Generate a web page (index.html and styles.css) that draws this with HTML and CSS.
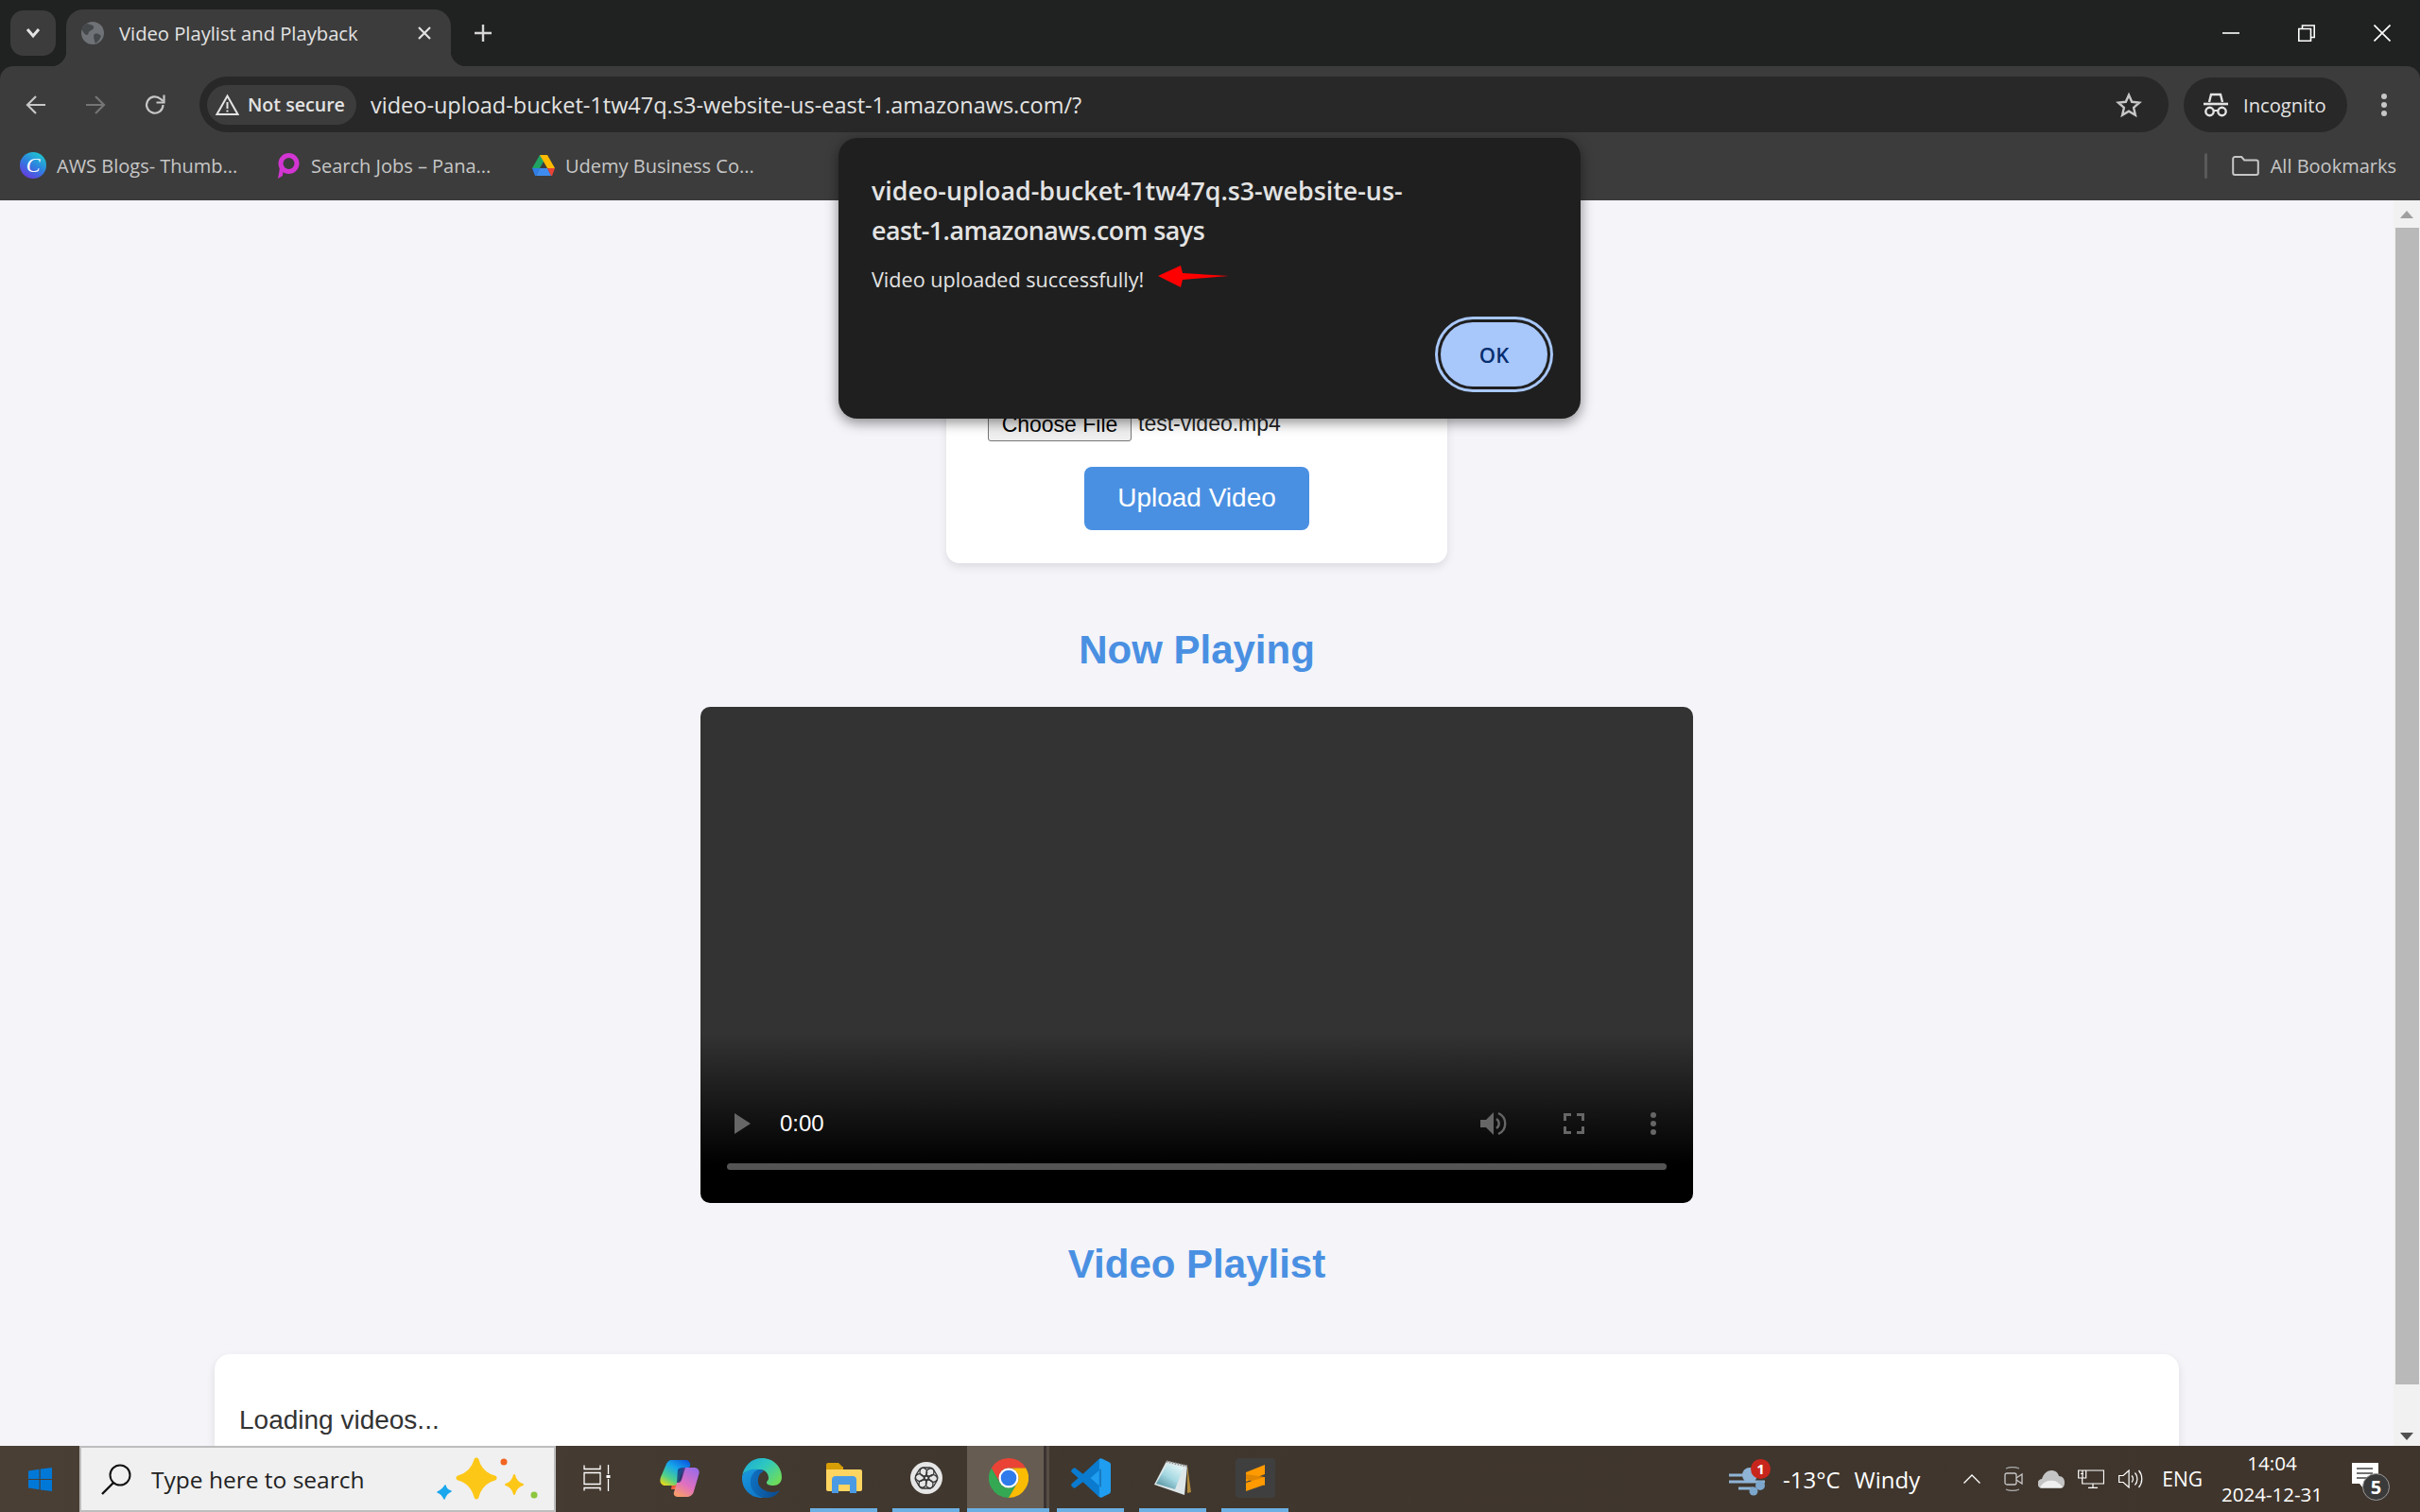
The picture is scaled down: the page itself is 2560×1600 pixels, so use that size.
FILE: index.html

```html
<!DOCTYPE html>
<html lang="en">
<head>
  <meta charset="UTF-8">
  <title>Video Playlist and Playback</title>
  <link rel="stylesheet" href="styles.css">
</head>
<body>
<div class="window">

  <!-- tab strip -->
  <div class="tabstrip">
    <div class="tab-search">
      <svg width="18" height="12" viewBox="0 0 18 12"><path d="M3 2l6 7 6-7" fill="none" stroke="#e3e3e3" stroke-width="3"/></svg>
    </div>
    <div class="tab">
      <svg class="tab-icon" width="24" height="24" viewBox="0 0 24 24"><circle cx="12" cy="12" r="12" fill="#6f7276"/><path d="M6 2c3 1 6 1 7 3s-2 4-4 5-1 4-3 4-4-3-5-5 2-6 5-7zM14 13c3-1 5 0 7 2-1 3-3 6-6 8-1-3-3-8-1-10z" fill="#45484b"/></svg>
      <span class="tab-title">Video Playlist and Playback</span>
      <svg class="tab-close" width="16" height="16" viewBox="0 0 16 16"><path d="M2 2l12 12M14 2L2 14" stroke="#e3e3e3" stroke-width="2.2"/></svg>
    </div>
    <svg class="new-tab" width="20" height="20" viewBox="0 0 20 20"><path d="M10 1v18M1 10h18" stroke="#d6d6d6" stroke-width="2.4"/></svg>
    <div class="win-controls">
      <svg width="18" height="18" viewBox="0 0 18 18"><path d="M0 9h18" stroke="#fff" stroke-width="1.6"/></svg>
      <svg width="18" height="18" viewBox="0 0 18 18"><path d="M.8 4.500h12.700v12.700H.8zM4.500 4V1h12.700v12.500h-3.500" fill="none" stroke="#fff" stroke-width="1.6"/></svg>
      <svg width="18" height="18" viewBox="0 0 18 18"><path d="M.5.5l17 17M17.500.5l-17 17" stroke="#fff" stroke-width="1.6"/></svg>
    </div>
  </div>

  <!-- address bar -->
  <div class="toolbar">
    <div class="nav-btn"><svg width="24" height="24" viewBox="0 0 24 24"><path d="M22 12H3M12 3l-9 9 9 9" fill="none" stroke="#c7c7c7" stroke-width="2.2"/></svg></div>
    <div class="nav-btn"><svg width="24" height="24" viewBox="0 0 24 24"><path d="M2 12h19M12 3l9 9-9 9" fill="none" stroke="#757575" stroke-width="2.2"/></svg></div>
    <div class="nav-btn"><svg width="24" height="24" viewBox="0 0 24 24"><path d="M20.500 12a8.700 8.700 0 1 1-2.700-6.300L20.500 8" fill="none" stroke="#c7c7c7" stroke-width="2.200"/><path d="M21.500 1.500v8h-8" fill="none" stroke="#c7c7c7" stroke-width="2.200"/></svg></div>
    <div class="omnibox">
      <div class="chip">
        <svg width="25" height="24" viewBox="0 0 25 24"><path d="M12.500 2.500L23.500 22H1.500z" fill="none" stroke="#e3e3e3" stroke-width="2"/><path d="M12.500 9v7M12.500 17.500v2" stroke="#e3e3e3" stroke-width="2"/></svg>
        <span class="chip-text">Not secure</span>
      </div>
      <span class="url">video-upload-bucket-1tw47q.s3-website-us-east-1.amazonaws.com/?</span>
      <svg class="star" width="28" height="28" viewBox="0 0 28 28"><path d="M14 3.500l3.200 7.300 7.900.800-6 5.300 1.800 7.800-6.900-4.100-6.900 4.100 1.800-7.800-6-5.300 7.900-.8z" fill="none" stroke="#c7c7c7" stroke-width="2.400" stroke-linejoin="miter"/></svg>
    </div>
    <div class="incognito">
      <svg width="28" height="26" viewBox="0 0 28 26"><path d="M7 10l2-8h10l2 8" fill="none" stroke="#e3e3e3" stroke-width="2.400"/><path d="M1 12h26" stroke="#e3e3e3" stroke-width="2.600"/><circle cx="7.500" cy="20" r="4.200" fill="none" stroke="#e3e3e3" stroke-width="2.400"/><circle cx="20.500" cy="20" r="4.200" fill="none" stroke="#e3e3e3" stroke-width="2.400"/><path d="M11.500 19h5" stroke="#e3e3e3" stroke-width="2"/></svg>
      <span>Incognito</span>
    </div>
    <div class="menu-dots"><i></i><i></i><i></i></div>
  </div>

  <!-- bookmarks -->
  <div class="bookmarks">
    <div class="bm bm-canva">
      <svg width="28" height="28" viewBox="0 0 28 28"><defs><linearGradient id="canva" x1="0.800" y1="0" x2="0.200" y2="1"><stop offset="0" stop-color="#1ccdd0"/><stop offset=".5" stop-color="#2f7fe0"/><stop offset="1" stop-color="#6a35e0"/></linearGradient></defs><circle cx="14" cy="14" r="14" fill="url(#canva)"/><text x="14" y="21" class="canva-c">C</text></svg>
      <span>AWS Blogs- Thumb...</span>
    </div>
    <div class="bm bm-pana">
      <svg width="24" height="27" viewBox="0 0 24 27"><circle cx="12.500" cy="11" r="8.500" fill="none" stroke="#d335d3" stroke-width="5"/><path d="M3 11c0 6-1 11-2 16l5-3 1-10z" fill="#d335d3"/></svg>
      <span>Search Jobs – Pana...</span>
    </div>
    <div class="bm bm-drive">
      <svg width="26" height="24" viewBox="0 0 26 24"><path d="M9 1h8L9 15H1z" fill="#1fa463"/><path d="M9 1h8l8 14h-8z" fill="#ffba00"/><path d="M1 15h8l-4 8H4z" fill="#2f7fe8"/><path d="M9 15h8l4 8H5z" fill="#3f8cf0"/><path d="M17 15h8l-3 8h-1z" fill="#ea4335"/></svg>
      <span>Udemy Business Co...</span>
    </div>
    <div class="bm-right">
      <div class="bm-divider"></div>
      <svg width="29" height="21" viewBox="0 0 29 21"><path d="M1.200 3a2 2 0 0 1 2-2h7l3 3.500h12.600a2 2 0 0 1 2 2V18a2 2 0 0 1-2 2H3.200a2 2 0 0 1-2-2z" fill="none" stroke="#c7c7c7" stroke-width="2"/></svg>
      <span>All Bookmarks</span>
    </div>
  </div>

  <!-- page -->
  <div class="viewport">
    <div class="page">
      <section class="upload-card">
        <div class="file-row">
          <button class="file-btn">Choose File</button>
          <span>test-video.mp4</span>
        </div>
        <button class="upload-btn">Upload Video</button>
      </section>

      <h2 class="now-playing">Now Playing</h2>
      <div class="player">
        <div class="player-controls">
          <div class="control-row">
            <svg width="18" height="22" viewBox="0 0 18 22"><path d="M0 0l17 11L0 22z" fill="#666"/></svg>
            <span class="time">0:00</span>
            <svg class="ctl-volume" width="28" height="26" viewBox="0 0 28 26"><path d="M0 9h6l8-8v24l-8-8H0z" fill="#666"/><path d="M17 8a6 6 0 0 1 0 10M19 2a12 12 0 0 1 0 22" fill="none" stroke="#666" stroke-width="2.400"/></svg>
            <svg class="ctl-full" width="22" height="22" viewBox="0 0 22 22"><path d="M1.500 8V1.500H8M14 1.500h6.500V8M20.500 14v6.500H14M8 20.500H1.500V14" fill="none" stroke="#666" stroke-width="3"/></svg>
            <svg class="ctl-more" width="6" height="24" viewBox="0 0 6 24"><circle cx="3" cy="3" r="3" fill="#666"/><circle cx="3" cy="12" r="3" fill="#666"/><circle cx="3" cy="21" r="3" fill="#666"/></svg>
          </div>
          <div class="progress"></div>
        </div>
      </div>

      <h2 class="playlist-title">Video Playlist</h2>
      <section class="playlist-card">
        <p class="loading">Loading videos...</p>
      </section>
    </div>
    <div class="scrollbar">
      <svg width="14" height="8" viewBox="0 0 14 8"><path d="M7 0l7 8H0z" fill="#a0a0a0"/></svg>
      <div class="thumb"></div>
      <svg width="14" height="8" viewBox="0 0 14 8"><path d="M0 0h14L7 8z" fill="#505050"/></svg>
    </div>
  </div>

  <!-- taskbar -->
  <div class="taskbar">
    <div class="start">
      <svg width="25" height="25" viewBox="0 0 25 25"><path d="M0 3.500l11.500-1.700v10.100H0zM12.700 1.600L25 0v11.900H12.700zM0 13.100h11.500v10.100L0 21.500zM12.700 13.100H25V25l-12.300-1.600z" fill="#0078d7"/></svg>
    </div>
    <div class="searchbox">
      <svg width="34" height="34" viewBox="0 0 34 34"><circle cx="21" cy="13" r="10.500" fill="none" stroke="#111" stroke-width="2"/><path d="M14 21L2 33" stroke="#111" stroke-width="2.400"/></svg>
      <span class="search-text">Type here to search</span>
      <svg class="sparkles" width="110" height="50" viewBox="0 0 110 50">
        <path d="M44 5Q48 20 63 24Q48 28 44 44Q40 28 25 24Q40 20 44 5Z" fill="#fdc717" stroke="#fdc717" stroke-width="5" stroke-linejoin="round"/>
        <path d="M84 21Q86 29 93 31Q86 33 84 41Q82 33 75 31Q82 29 84 21Z" fill="#fdc717" stroke="#fdc717" stroke-width="2" stroke-linejoin="round"/>
        <path d="M11 32Q12 37 17 38Q12 40 10 46Q8 41 3 39Q8 37 11 32Z" fill="#1aa7ee" stroke="#1aa7ee" stroke-width="1.500" stroke-linejoin="round"/>
        <circle cx="73" cy="7" r="3.500" fill="#f26522"/>
        <circle cx="105" cy="42" r="3.500" fill="#8cc63f"/>
      </svg>
    </div>
    <div class="task-btn">
      <svg width="30" height="28" viewBox="0 0 30 28"><path d="M1 .5v4h17v-4M1 8.500h17v12H1zM1 27.500v-3h17v3" fill="none" stroke="#fff" stroke-width="1.300"/><path d="M26.500 0v10M26.500 15v13" stroke="#fff" stroke-width="1.300"/><rect x="24.500" y="11" width="4" height="3" fill="#fff"/></svg>
    </div>
    <div class="task-btn">
      <svg width="42" height="42" viewBox="0 0 42 42">
        <defs>
          <linearGradient id="cop1" x1="0.800" y1="0" x2="0.100" y2="1"><stop offset="0" stop-color="#0c5fe0"/><stop offset=".35" stop-color="#17a8ea"/><stop offset=".7" stop-color="#4fd08a"/><stop offset="1" stop-color="#f4d90e"/></linearGradient>
          <linearGradient id="cop2" x1="0.800" y1="0" x2="0.300" y2="1"><stop offset="0" stop-color="#9a6be8"/><stop offset=".6" stop-color="#e070c0"/><stop offset="1" stop-color="#f79a6d"/></linearGradient>
          <linearGradient id="cop3" x1="0" y1="0" x2="1" y2="1"><stop offset="0" stop-color="#e8352d"/><stop offset="1" stop-color="#fb9a5a"/></linearGradient>
        </defs>
        <path d="M12 33h16c4 0 5 1 4-3l-4-4H13z" fill="url(#cop3)"/>
        <path d="M12 2h14c5 0 7 3 6 7l-8 4-4 12c-1 3-3 4-6 4H6c-4 0-7-3-5-9L7 6c1-2 3-4 5-4z" fill="url(#cop1)"/>
        <path d="M24 10h12c4 0 7 3 5 8l-5 17c-1 4-4 6-8 6h-9c-3 0-5-2-4-5l3-10c3-1 4-3 5-6z" fill="url(#cop2)"/>
        <path d="M19 12c2-2 5-2 8-2l-4 13c-1 3-3 3-5 3z" fill="#1c2b6e" opacity=".75"/>
      </svg>
    </div>
    <div class="task-btn">
      <svg width="42" height="42" viewBox="0 0 42 42">
        <defs>
          <linearGradient id="edge1" x1="0" y1="0" x2="1" y2="0.700"><stop offset="0" stop-color="#1aa7d8"/><stop offset=".5" stop-color="#2ec8c0"/><stop offset="1" stop-color="#6ddc5c"/></linearGradient>
          <linearGradient id="edge2" x1="0" y1="0" x2="0.500" y2="1"><stop offset="0" stop-color="#1a9be0"/><stop offset="1" stop-color="#0f79c8"/></linearGradient>
          <linearGradient id="edge3" x1="0" y1="0" x2="1" y2="0.300"><stop offset="0" stop-color="#0f73c4"/><stop offset="1" stop-color="#0c4f95"/></linearGradient>
        </defs>
        <path d="M0 19C2 8 10 0 21 0c13 0 21 10 21 20 0 6-4 9-9 9-4 0-7-1-7-3s2-2 2-5c0-5-4-9-9-9C10 12 2 13 0 19z" fill="url(#edge1)"/>
        <path d="M0 19c3-6 9-8 18-7-7 3-9 10-8 16s6 12 13 14C9 43-1 33 0 19z" fill="url(#edge2)"/>
        <path d="M18 12c-7 2-10 9-9 16s8 14 17 14c6 0 11-3 14-8-4 2-9 3-14 1-6-2-10-7-9-12 0-5 3-8 6-9-2-2-3-2-5-2z" fill="url(#edge3)"/>
      </svg>
    </div>
    <div class="task-btn open">
      <svg width="38" height="32" viewBox="0 0 38 32"><path d="M0 2a2 2 0 0 1 2-2h11l4 4h1v6H0z" fill="#d89e06"/><path d="M0 7h36a2 2 0 0 1 2 2v19a2 2 0 0 1-2 2H2a2 2 0 0 1-2-2z" fill="#ffd561"/><path d="M6 32V18a4 4 0 0 1 4-4h18a4 4 0 0 1 4 4v14h-7v-9H13v9z" fill="#4a9be4"/></svg>
    </div>
    <div class="task-btn open">
      <svg width="34" height="34" viewBox="0 0 34 34"><circle cx="17" cy="17" r="17" fill="#e6e6e6"/><g fill="none" stroke="#333" stroke-width="1.300"><rect x="10" y="6" width="15" height="9" rx="4.500"/><rect x="10" y="6" width="15" height="9" rx="4.500" transform="rotate(60 17 17)"/><rect x="10" y="6" width="15" height="9" rx="4.500" transform="rotate(120 17 17)"/><rect x="10" y="6" width="15" height="9" rx="4.500" transform="rotate(180 17 17)"/><rect x="10" y="6" width="15" height="9" rx="4.500" transform="rotate(240 17 17)"/><rect x="10" y="6" width="15" height="9" rx="4.500" transform="rotate(300 17 17)"/></g></svg>
    </div>
    <div class="task-btn open active">
      <svg width="42" height="42" viewBox="0 0 48 48"><path d="M24 0a24 24 0 0 1 20.800 12H24a12 12 0 0 0-10.400 18L3.200 12A24 24 0 0 1 24 0z" fill="#ea4335"/><path d="M3.200 12l10.400 18a12 12 0 0 0 20.800 0L24 48A24 24 0 0 1 3.200 12z" fill="#34a853"/><path d="M44.800 12H24a12 12 0 0 1 10.400 18L24 48a24 24 0 0 0 20.800-36z" fill="#fbbc04"/><circle cx="24" cy="24" r="12" fill="#fff"/><circle cx="24" cy="24" r="9.500" fill="#2f7bec"/></svg>
    </div>
    <div class="task-btn open">
      <svg width="42" height="42" viewBox="0 0 100 100"><path d="M71 2L30 40 12 26c-2-2-5-2-7 0l-3 3c-2 2-2 5 0 7l16 14L2 64c-2 2-2 5 0 7l3 3c2 2 5 2 7 0l18-14 41 38 4-2V4z" fill="#0a7bcf"/><path fill-rule="evenodd" d="M71 3c2-3 5-3 8-1l17 8c3 1 4 4 4 7v66c0 3-1 6-4 7l-17 8c-3 2-6 2-8-1zM75 27L49 50l26 23z" fill="#1f9df0"/></svg>
    </div>
    <div class="task-btn open">
      <svg width="40" height="38" viewBox="0 0 40 38">
        <defs><linearGradient id="note" x1="0.100" y1="1" x2="0.800" y2="0"><stop offset="0" stop-color="#4a8795"/><stop offset=".5" stop-color="#a4d8e2"/><stop offset="1" stop-color="#e6f6f8"/></linearGradient></defs>
        <path d="M35 6l4 28-4 1z" fill="#b08a3c"/>
        <path d="M13 1L35 6 32 37 0 26z" fill="#dde6e8"/>
        <path d="M14 4L31 8 22 31 2 25z" fill="url(#note)"/>
        <path d="M13 1.500l22 5" stroke="#8f8f8f" stroke-width="2.400" stroke-dasharray="1.500 1.500"/>
      </svg>
    </div>
    <div class="task-btn open">
      <svg width="42" height="42" viewBox="0 0 42 42"><rect width="42" height="42" rx="4" fill="#3f3f3f"/><path d="M11 15L31 7v10L11 25z" fill="#ff9a00"/><path d="M11 22l20 7v-9l-20-3z" fill="#e08600"/><path d="M11 26L31 20v8L11 35z" fill="#ff9a00"/></svg>
    </div>

    <div class="tray">
      <svg class="tray-wind" width="41" height="36" viewBox="0 0 41 36">
        <circle cx="22" cy="14" r="8" fill="#8fb4d6"/><path d="M0 14h24M0 21h38M10 28h16" stroke="#8fb4d6" stroke-width="3" fill="none"/><circle cx="33" cy="25" r="5" fill="#7ca6cb"/><circle cx="26" cy="31" r="4.500" fill="#7ca6cb"/>
      </svg>
      <span class="tray-temp">-13°C</span>
      <span class="tray-cond">Windy</span>
      <svg class="tray-chev" width="18" height="10" viewBox="0 0 18 10"><path d="M.5 9.500L9 1l8.500 8.500" fill="none" stroke="#fff" stroke-width="1.300"/></svg>
      <svg class="tray-meet" width="20" height="26" viewBox="0 0 20 26"><path d="M2 2q7-3 14 0M2 24q7 3 14 0" fill="none" stroke="#a8a8a8" stroke-width="1.300"/><rect x="1" y="7" width="12" height="12" rx="2" fill="none" stroke="#c8c8c8" stroke-width="1.300"/><path d="M13 12l6-4v10l-6-4" fill="none" stroke="#c8c8c8" stroke-width="1.300"/></svg>
      <svg class="tray-cloud" width="28" height="19" viewBox="0 0 28 19"><path d="M5 19a5 5 0 0 1-1-10C6 3 10 0 14 0c4 0 7 2 8 6 4 0 6 3 6 7s-2 6-5 6z" fill="#c4c4c4"/><path d="M2 18c3-5 8-8 12-7 4-1 9 3 12 7z" fill="#efefef"/></svg>
      <svg class="tray-net" width="28" height="20" viewBox="0 0 28 20"><path d="M5 1h22.500v14H5M5 9V1M0.700 1h8v8h-8zM4.700 9v6h13M16 15v4M11 19.400h10M3 4.500h3" fill="none" stroke="#fff" stroke-width="1.200"/></svg>
      <svg class="tray-vol" width="26" height="20" viewBox="0 0 26 20"><path d="M.6 6.500h4.500l6-5.500v18l-6-5.500H.6z" fill="none" stroke="#fff" stroke-width="1.200"/><path d="M14 6.500a5 5 0 0 1 0 7M17.500 3.500a10 10 0 0 1 0 13M21.500 1a14 14 0 0 1 0 18" fill="none" stroke="#fff" stroke-width="1.200"/></svg>
      <span class="tray-lang">ENG</span>
      <div class="clock"><span>14:04</span><span>2024-12-31</span></div>
      <div class="notify">
        <svg width="28" height="28" viewBox="0 0 28 28"><path d="M0 0h28v22H14l-2 5-4-5H0z" fill="#fff"/><path d="M5 6h17M5 11h17M5 16h12" stroke="#444" stroke-width="1.500"/></svg>
        <span class="notify-count">5</span>
      </div>
    </div>
    <div class="wind-badge">1</div>
  </div>

  <!-- alert dialog -->
  <div class="dialog">
    <div class="dialog-title">video-upload-bucket-1tw47q.s3-website-us-<br><span class="title-rest">east-1.amazonaws.com says</span></div>
    <div class="dialog-msg">
      <span>Video uploaded successfully!</span>
      <svg width="75" height="23" viewBox="0 0 75 23"><path d="M0 11L24 0l2 8 49 3-49 4-2 8z" fill="#f00"/></svg>
    </div>
    <button class="dialog-ok"><span>OK</span></button>
  </div>

</div>
</body>
</html>
```

FILE: styles.css

```css
* {
  box-sizing: border-box;
}
body {
  margin: 0;
  font-family: "Open Sans", "Noto Sans", sans-serif;
  overflow: hidden;
}
.window {
  position: relative;
  width: 2560px;
  height: 1600px;
  display: flex;
  flex-direction: column;
  background-color: #202221;
}

/* tab strip */
.tabstrip {
  height: 70px;
  flex-shrink: 0;
  display: flex;
  align-items: flex-end;
  padding-left: 11px;
}
.tab-search {
  width: 48px;
  height: 48px;
  align-self: flex-start;
  margin-top: 11px;
  background-color: #3c3c3c;
  border-radius: 14px;
  display: flex;
  align-items: center;
  justify-content: center;
}
.tab {
  position: relative;
  z-index: 1;
  width: 407px;
  height: 60px;
  margin-left: 11px;
  padding: 0 20px 10px 16px;
  background-color: #3c3c3c;
  border-radius: 18px 18px 0 0;
  display: flex;
  align-items: center;
  color: #e3e3e3;
}
.tab::before,
.tab::after {
  content: "";
  position: absolute;
  bottom: 0;
  width: 16px;
  height: 16px;
}
.tab::before {
  left: -16px;
  background: radial-gradient(circle at 0 0, transparent 16px, #3c3c3c 16.5px);
}
.tab::after {
  right: -16px;
  background: radial-gradient(circle at 100% 0, transparent 16px, #3c3c3c 16.5px);
}
.tab-title {
  margin-left: 16px;
  font-size: 20.2px;
  flex: 1;
  white-space: nowrap;
}
.new-tab {
  margin: 0 0 25px 24px;
}
.win-controls {
  margin-left: auto;
  align-self: flex-start;
  margin-top: 26px;
  display: flex;
  gap: 62px;
  padding-right: 31px;
}

/* toolbar */
.toolbar {
  height: 70px;
  flex-shrink: 0;
  display: flex;
  align-items: center;
  padding: 11px 0 0 6px;
  background-color: #3c3c3c;
  border-radius: 14px 14px 0 0;
}
.nav-btn {
  width: 63px;
  display: flex;
  justify-content: center;
}
.omnibox {
  flex: 1;
  height: 59px;
  margin-left: 16px;
  padding: 0 28px 0 8px;
  background-color: #282828;
  border-radius: 30px;
  display: flex;
  align-items: center;
  color: #e3e3e3;
}
.chip {
  width: 158px;
  height: 42px;
  padding-left: 9px;
  background-color: #3c3c3c;
  border-radius: 21px;
  display: flex;
  align-items: center;
  gap: 9px;
}
.chip-text {
  font-size: 19.6px;
  font-weight: 600;
  white-space: nowrap;
}
.url {
  margin-left: 15px;
  font-size: 23.5px;
  white-space: nowrap;
}
.star {
  margin-left: auto;
}
.incognito {
  width: 173px;
  height: 58px;
  margin-left: 16px;
  padding-left: 20px;
  background-color: #282828;
  border-radius: 29px;
  display: flex;
  align-items: center;
  gap: 15px;
  font-size: 20.2px;
  color: #e3e3e3;
}
.menu-dots {
  width: 77px;
  display: flex;
  flex-direction: column;
  align-items: center;
  gap: 3px;
}
.menu-dots i {
  width: 6px;
  height: 6px;
  border-radius: 50%;
  background-color: #c7c7c7;
}

/* bookmarks */
.bookmarks {
  height: 72px;
  flex-shrink: 0;
  display: flex;
  align-items: center;
  padding: 0 25px 2px 21px;
  background-color: #3c3c3c;
  font-size: 20px;
  color: #c7c7c7;
}
.bm {
  display: flex;
  align-items: center;
  white-space: nowrap;
}
.bm-canva {
  width: 272px;
  gap: 11px;
}
.canva-c {
  font-family: "Liberation Serif", serif;
  font-style: italic;
  font-size: 22px;
  fill: #fff;
  text-anchor: middle;
}
.bm-pana {
  width: 269px;
  gap: 12px;
}
.bm-drive {
  gap: 10px;
}
.bm-right {
  margin-left: auto;
  display: flex;
  align-items: center;
  gap: 12px;
}
.bm-divider {
  width: 3px;
  height: 27px;
  margin-right: 14px;
  background-color: #5a5a5a;
  border-radius: 2px;
}

/* page */
.viewport {
  flex: 1;
  min-height: 0;
  display: flex;
  background-color: #f4f4f9;
  overflow: hidden;
}
.page {
  flex: 1;
  min-width: 0;
  display: flex;
  flex-direction: column;
  align-items: center;
  padding-top: 128px;
  font-family: "Liberation Sans", Arial, sans-serif;
  color: #333;
}
.page > * {
  flex-shrink: 0;
}
.upload-card {
  width: 530px;
  padding: 89px 44px 35px;
  background-color: #fff;
  border-radius: 14px;
  box-shadow: 0 4px 10px rgba(0, 0, 0, 0.1);
  display: flex;
  flex-direction: column;
  align-items: center;
}
.file-row {
  align-self: stretch;
  height: 38px;
  display: flex;
  align-items: center;
  gap: 7px;
  font-size: 23px;
  line-height: 40px;
  color: #222;
}
.file-btn {
  width: 152px;
  height: 38px;
  padding: 2px 0 0;
  background-color: #efefef;
  border: 1px solid #767676;
  border-radius: 3px;
  font-family: inherit;
  font-size: 23px;
  color: #000;
}
.upload-btn {
  width: 238px;
  height: 67px;
  margin-top: 27px;
  padding: 0 0 2px;
  background-color: #4a90e2;
  border: none;
  border-radius: 8px;
  font-family: inherit;
  font-size: 28px;
  color: #fff;
}
.now-playing,
.playlist-title {
  margin: 0;
  height: 50px;
  font-size: 42px;
  line-height: 50px;
  color: #4a90e2;
}
.now-playing {
  margin-top: 67px;
}
.playlist-title {
  margin-top: 40px;
}
.player {
  width: 1050px;
  height: 525px;
  margin-top: 35px;
  background: linear-gradient(180deg, #333 0, #333 345px, #000 485px);
  border-radius: 10px;
  display: flex;
  flex-direction: column;
  justify-content: flex-end;
}
.player-controls {
  padding: 0 28px 35px;
}
.control-row {
  display: flex;
  align-items: center;
  height: 26px;
  padding-left: 8px;
  margin-bottom: 29px;
}
.time {
  margin-left: 30px;
  font-size: 24px;
  color: #fff;
}
.ctl-volume {
  margin-left: auto;
}
.ctl-full {
  margin-left: 60px;
}
.ctl-more {
  margin: 0 11px 0 70px;
}
.progress {
  height: 7px;
  background-color: #545454;
  border-radius: 4px;
}
.playlist-card {
  width: 2078px;
  margin-top: 70px;
  padding: 50px 26px;
  background-color: #fff;
  border-radius: 16px;
  box-shadow: 0 4px 10px rgba(0, 0, 0, 0.1);
}
.loading {
  margin: 0;
  font-size: 28px;
  line-height: 40px;
}
.scrollbar {
  width: 28px;
  background-color: #f1f1f1;
  display: flex;
  flex-direction: column;
  align-items: center;
  padding-top: 11px;
}
.thumb {
  width: 25px;
  height: 1224px;
  flex-shrink: 0;
  margin-top: 10px;
  background-color: #b9b9b9;
}
.scrollbar svg:last-child {
  margin-top: 51px;
}

/* taskbar */
.taskbar {
  position: relative;
  height: 70px;
  flex-shrink: 0;
  display: flex;
  background: linear-gradient(90deg, #4a3f35, #40372e 40%, #3f352c);
}
.start {
  width: 84px;
  display: flex;
  align-items: center;
  justify-content: center;
}
.searchbox {
  width: 504px;
  padding-left: 20px;
  background-color: #f0f0f0;
  border: 2px solid #bdbdbd;
  display: flex;
  align-items: center;
}
.search-text {
  margin-left: 20px;
  font-size: 24.5px;
  color: #222;
  white-space: nowrap;
}
.sparkles {
  margin-left: auto;
  margin-right: 16px;
}
.task-btn {
  position: relative;
  width: 87px;
  display: flex;
  align-items: center;
  justify-content: center;
  padding-bottom: 2px;
}
.task-btn.open::after {
  content: "";
  position: absolute;
  left: 8px;
  right: 8px;
  bottom: 0;
  height: 4px;
  background-color: #6cb0e3;
}
.task-btn.active {
  background: linear-gradient(90deg, #665c52 81px, #3a3330 81px, #3a3330 84px, #564d45 84px);
}
.task-btn.active::after {
  left: 0;
  right: 0;
}
.tray {
  margin-left: auto;
  display: flex;
  align-items: center;
  color: #fff;
  white-space: nowrap;
}
.tray-temp,
.tray-cond {
  font-size: 24px;
}
.tray-temp {
  margin-left: 16px;
}
.tray-cond {
  margin-left: 15px;
}
.tray-chev {
  margin-left: 46px;
}
.tray-meet {
  margin-left: 25px;
}
.tray-cloud {
  margin-left: 16px;
}
.tray-net {
  margin-left: 14px;
}
.tray-vol {
  margin-left: 15px;
}
.tray-lang {
  margin-left: 20px;
  font-size: 21px;
}
.clock {
  width: 103px;
  margin-left: 22px;
  display: flex;
  flex-direction: column;
  align-items: center;
  gap: 8px;
  font-size: 20.5px;
  line-height: 25px;
}
.notify {
  position: relative;
  width: 28px;
  height: 28px;
  margin: 0 44px 6px 33px;
}
.notify-count {
  position: absolute;
  left: 11px;
  top: 11px;
  width: 29px;
  height: 29px;
  border: 1px solid #9a9a9a;
  border-radius: 50%;
  background-color: #3a3a3a;
  font-size: 20px;
  font-weight: 700;
  line-height: 27px;
  text-align: center;
}
.wind-badge {
  position: absolute;
  left: 1852px;
  top: 14px;
  width: 21px;
  height: 21px;
  border-radius: 50%;
  background-color: #c8261d;
  color: #fff;
  font-size: 15px;
  font-weight: 700;
  line-height: 21px;
  text-align: center;
}

/* alert dialog */
.dialog {
  position: absolute;
  left: 887px;
  top: 146px;
  width: 785px;
  height: 297px;
  padding: 35px 35px 34px 35px;
  background-color: #1f1f1f;
  border-radius: 20px;
  box-shadow: 0 4px 14px rgba(0, 0, 0, 0.45);
  display: flex;
  flex-direction: column;
  color: #e3e3e3;
}
.dialog-title {
  font-size: 26.8px;
  font-weight: 600;
  line-height: 42px;
  white-space: nowrap;
}
.title-rest {
  letter-spacing: -0.5px;
}
.dialog-msg {
  margin-top: 16px;
  display: flex;
  align-items: flex-start;
  gap: 15px;
  font-size: 21.6px;
  line-height: 30px;
}
.dialog-ok {
  width: 113px;
  height: 68px;
  margin-top: auto;
  align-self: flex-end;
  padding: 0;
  background-color: #a8c7fa;
  border: none;
  border-radius: 34px;
  box-shadow: 0 0 0 3px #1f1f1f, 0 0 0 6px #a8c7fa;
  font-family: inherit;
  font-size: 22px;
  font-weight: 600;
  color: #062e6f;
}
```
